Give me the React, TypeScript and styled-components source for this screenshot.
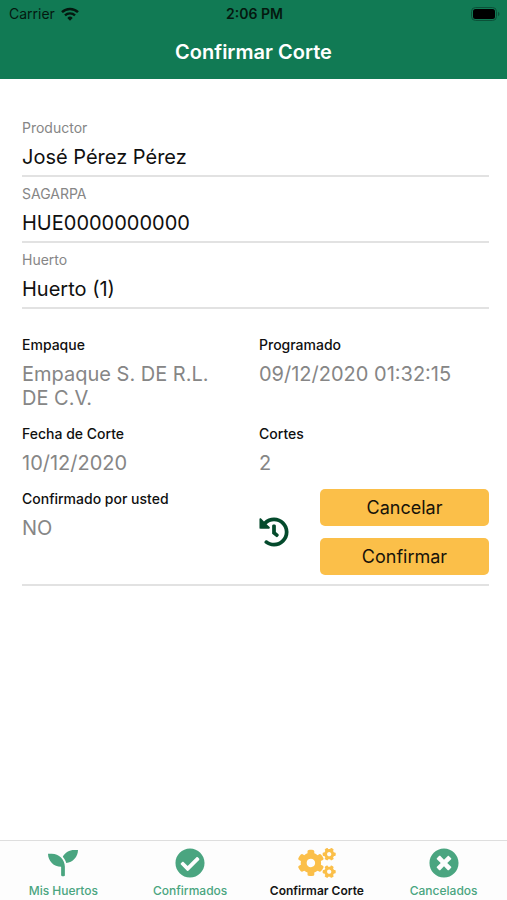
import React from "react";
import styled, { createGlobalStyle } from "styled-components";
import { FaCheckCircle, FaCogs, FaHistory, FaSeedling, FaTimesCircle } from "react-icons/fa";

const GlobalStyle = createGlobalStyle`
  * { box-sizing: border-box; }
  body { margin: 0; background: #ffffff; color: #101010; font-family: Inter, "Liberation Sans", sans-serif; }
`;

const Screen = styled.div`
  min-height: 100vh;
  display: flex;
  flex-direction: column;
`;

const Header = styled.header`
  background: #117a54;
  padding-bottom: 8px;
`;

const StatusBar = styled.div`
  display: grid;
  grid-template-columns: 1fr auto 1fr;
  align-items: center;
  height: 26px;
  padding: 1px 7px 0 9px;
  color: #04180f;
  font-size: 14px;
`;

const Carrier = styled.div`
  display: flex;
  align-items: center;
  gap: 6px;
`;

const Clock = styled.time`
  font-weight: 600;
`;

const Battery = styled.svg`
  justify-self: end;
`;

const Title = styled.h1`
  margin: 0;
  padding-top: 7px;
  color: #ffffff;
  font-size: 20px;
  font-weight: 600;
  line-height: 38px;
  text-align: center;
`;

const Content = styled.main`
  flex: 1;
  padding: 32px 18px 0 22px;
`;

const FieldList = styled.dl`
  margin: 0;
`;

const Field = styled.div`
  height: 66px;
  padding-top: 7px;
  border-bottom: 2px solid #e2e2e2;
`;

const FieldLabel = styled.dt`
  color: #868686;
  font-size: 14px;
  line-height: 20px;
`;

const FieldValue = styled.dd`
  margin: 0;
  padding-top: 6px;
  font-size: 20px;
  line-height: 26px;
`;

const Details = styled.section`
  display: grid;
  grid-template-columns: 1fr 1fr;
  gap: 14px 7px;
  padding: 26px 0 9px;
  border-bottom: 2px solid #e2e2e2;
`;

const Detail = styled.dl`
  margin: 0;
`;

const DetailLabel = styled.dt`
  font-size: 14px;
  font-weight: 500;
  line-height: 20px;
`;

const DetailValue = styled.dd`
  margin: 0;
  padding: 7px 20px 0 0;
  color: #868686;
  font-size: 20px;
  line-height: 24px;
`;

const Actions = styled.div`
  display: flex;
  align-items: center;
  gap: 31px;
`;

const HistoryButton = styled.button`
  display: flex;
  padding: 0;
  border: 0;
  background: none;
  color: #044a2c;
  font-size: 30px;
`;

const ButtonStack = styled.div`
  flex: 1;
  display: flex;
  flex-direction: column;
  gap: 12px;
`;

const ActionButton = styled.button`
  height: 37px;
  padding: 0;
  border: 0;
  border-radius: 5px;
  background: #fbbf49;
  color: #17130a;
  font-family: inherit;
  font-size: 18px;
`;

const TabBar = styled.nav`
  display: grid;
  grid-template-columns: repeat(4, 1fr);
  height: 60px;
  border-top: 1px solid #dedede;
  background: #fdfdfd;
`;

const Tab = styled.a<{ $active?: boolean }>`
  display: flex;
  flex-direction: column;
  align-items: center;
  padding-top: 7px;
  color: ${(p) => (p.$active ? "#151515" : "#4aa580")};
  font-size: 12px;
  font-weight: ${(p) => (p.$active ? 600 : 500)};
  line-height: 16px;
  text-decoration: none;
  white-space: nowrap;
`;

const TabIcon = styled.span<{ $active?: boolean }>`
  display: flex;
  align-items: center;
  justify-content: center;
  height: 30px;
  margin-bottom: 5px;
  color: ${(p) => (p.$active ? "#fbbf49" : "#4aa580")};

  svg {
    width: 38px;
    height: 30px;
  }
`;

const fields = [
  { label: "Productor", value: "José Pérez Pérez" },
  { label: "SAGARPA", value: "HUE0000000000" },
  { label: "Huerto", value: "Huerto (1)" },
];

const details = [
  { label: "Empaque", value: "Empaque S. DE R.L. DE C.V." },
  { label: "Programado", value: "09/12/2020 01:32:15" },
  { label: "Fecha de Corte", value: "10/12/2020" },
  { label: "Cortes", value: "2" },
  { label: "Confirmado por usted", value: "NO" },
];

const tabs = [
  { label: "Mis Huertos", href: "#huertos", Icon: FaSeedling },
  { label: "Confirmados", href: "#confirmados", Icon: FaCheckCircle },
  { label: "Confirmar Corte", href: "#confirmar", Icon: FaCogs, active: true },
  { label: "Cancelados", href: "#cancelados", Icon: FaTimesCircle },
];

function WifiIcon() {
  return (
    <svg width="18" height="14" viewBox="0 0 18 14" fill="none" stroke="currentColor" aria-hidden="true">
      <path d="M1 5.2a11.4 11.4 0 0 1 16 0" strokeWidth="2.5" />
      <path d="M4 8.4a7.1 7.1 0 0 1 10 0" strokeWidth="2.3" />
      <path d="M6.3 10.9a3.9 3.9 0 0 1 5.4 0L9 13.7z" fill="currentColor" stroke="none" />
    </svg>
  );
}

function BatteryIcon() {
  return (
    <Battery width="29" height="14" viewBox="0 0 29 14" aria-hidden="true">
      <rect x="0.5" y="0.5" width="25" height="13" rx="4" fill="none" stroke="#0b5138" />
      <rect x="2" y="2" width="22" height="10" rx="2.5" fill="#000000" />
      <path d="M27 4.8c2 .8 2 3.6 0 4.4z" fill="#0b5138" />
    </Battery>
  );
}

export default function App() {
  return (
    <>
      <GlobalStyle />
      <Screen>
        <Header>
          <StatusBar>
            <Carrier>
              Carrier
              <WifiIcon />
            </Carrier>
            <Clock>2:06 PM</Clock>
            <BatteryIcon />
          </StatusBar>
          <Title>Confirmar Corte</Title>
        </Header>
        <Content>
          <FieldList>
            {fields.map((f) => (
              <Field key={f.label}>
                <FieldLabel>{f.label}</FieldLabel>
                <FieldValue>{f.value}</FieldValue>
              </Field>
            ))}
          </FieldList>
          <Details>
            {details.map((d) => (
              <Detail key={d.label}>
                <DetailLabel>{d.label}</DetailLabel>
                <DetailValue>{d.value}</DetailValue>
              </Detail>
            ))}
            <Actions>
              <HistoryButton type="button" aria-label="Historial">
                <FaHistory />
              </HistoryButton>
              <ButtonStack>
                <ActionButton type="button">Cancelar</ActionButton>
                <ActionButton type="button">Confirmar</ActionButton>
              </ButtonStack>
            </Actions>
          </Details>
        </Content>
        <TabBar>
          {tabs.map(({ label, href, Icon, active }) => (
            <Tab key={label} href={href} $active={active} aria-current={active ? "page" : undefined}>
              <TabIcon $active={active}>
                <Icon />
              </TabIcon>
              {label}
            </Tab>
          ))}
        </TabBar>
      </Screen>
    </>
  );
}
